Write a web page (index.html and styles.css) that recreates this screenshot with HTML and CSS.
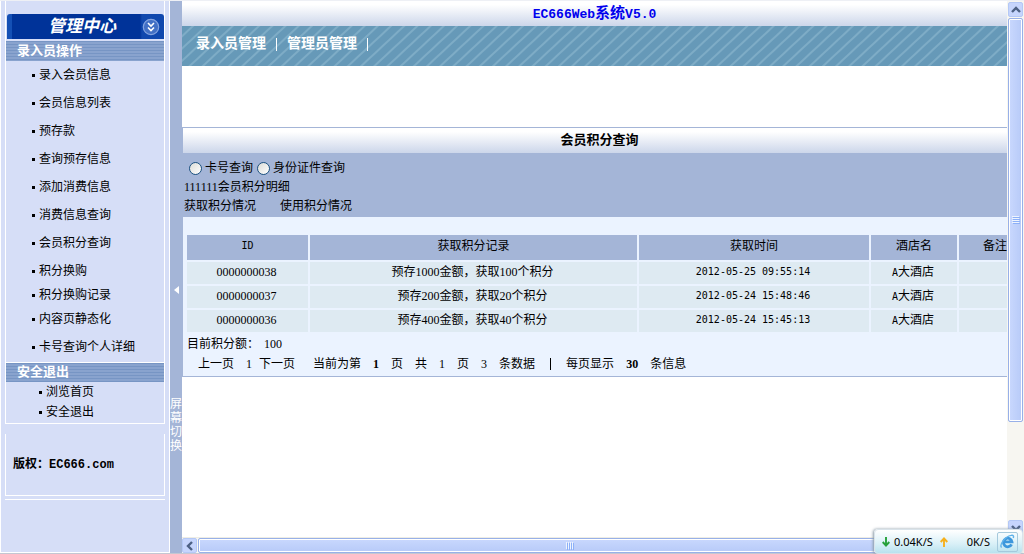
FILE: index.html
```html
<!DOCTYPE html>
<html lang="zh-CN">
<head>
<meta charset="utf-8">
<title>EC666Web系统V5.0</title>
<link rel="stylesheet" href="styles.css">
</head>
<body>
<div class="page">
  <aside class="sidebar">
    <div class="side-top">
      <div class="brand">
        <span class="brand-name">管理中心</span>
        <svg class="brand-icon" width="18" height="18" viewBox="0 0 18 18"><circle cx="9" cy="9" r="7.7" fill="#4270c5" stroke="#83a3e0" stroke-width="1.2"/><path d="M6 5l3 3 3-3M6 9.5l3 3 3-3" fill="none" stroke="#fff" stroke-width="1.6"/></svg>
      </div>
      <h2 class="side-head">录入员操作</h2>
      <ul class="menu">
        <li><a href="#">录入会员信息</a></li>
        <li><a href="#">会员信息列表</a></li>
        <li><a href="#">预存款</a></li>
        <li><a href="#">查询预存信息</a></li>
        <li><a href="#">添加消费信息</a></li>
        <li><a href="#">消费信息查询</a></li>
        <li><a href="#">会员积分查询</a></li>
        <li class="tight first"><a href="#">积分换购</a></li>
        <li class="tight"><a href="#">积分换购记录</a></li>
        <li class="tight"><a href="#">内容页静态化</a></li>
        <li class="last"><a href="#">卡号查询个人详细</a></li>
      </ul>
      <h2 class="side-head exit-head">安全退出</h2>
      <ul class="menu exit-menu">
        <li><a href="#">浏览首页</a></li>
        <li><a href="#">安全退出</a></li>
      </ul>
    </div>
    <div class="copyright">版权：<span class="latin">EC666.com</span></div>
  </aside>
  <button class="switch" type="button">
    <svg width="5" height="8" viewBox="0 0 5 8"><path d="M5 0v8L0 4z" fill="#fff"/></svg>
    <span class="switch-text">屏幕切换</span>
  </button>
  <main class="main">
    <h1 class="title"><span class="latin">EC666Web</span>系统<span class="latin">V5.0</span></h1>
    <nav class="nav">
      <a href="#">录入员管理</a>
      <a href="#">管理员管理</a>
    </nav>
    <section class="panel">
      <h2 class="panel-title">会员积分查询</h2>
      <form class="search">
        <div class="line options">
          <label><input type="radio" name="mode">卡号查询</label>
          <label><input type="radio" name="mode">身份证件查询</label>
        </div>
        <div class="line">111111会员积分明细</div>
        <div class="line tabs"><a href="#">获取积分情况</a><a href="#">使用积分情况</a></div>
      </form>
      <table class="records">
        <colgroup><col class="c-id"><col class="c-record"><col class="c-time"><col class="c-hotel"><col class="c-note"></colgroup>
        <thead><tr><th class="mono">ID</th><th>获取积分记录</th><th>获取时间</th><th>酒店名</th><th>备注</th></tr></thead>
        <tbody>
          <tr><td>0000000038</td><td>预存1000金额，获取100个积分</td><td class="mono">2012-05-25 09:55:14</td><td><span class="mono">A</span>大酒店</td><td></td></tr>
          <tr><td>0000000037</td><td>预存200金额，获取20个积分</td><td class="mono">2012-05-24 15:48:46</td><td><span class="mono">A</span>大酒店</td><td></td></tr>
          <tr><td>0000000036</td><td>预存400金额，获取40个积分</td><td class="mono">2012-05-24 15:45:13</td><td><span class="mono">A</span>大酒店</td><td></td></tr>
        </tbody>
      </table>
      <div class="total"><span>目前积分额：</span><span>100</span></div>
      <div class="pager">
        <div class="steps"><a href="#">上一页</a><span class="num">1</span><a href="#">下一页</a></div>
        <span>当前为第</span><b>1</b><span>页</span><span>共</span><span>1</span><span>页</span><span>3</span><span>条数据</span><span class="bar"></span><span>每页显示</span><b>30</b><span>条信息</span>
      </div>
    </section>
  </main>
  <div class="vscroll">
    <button class="sbtn" type="button" aria-label="向上滚动"><svg width="10" height="8" viewBox="0 0 10 8"><path d="M1 6l4-4 4 4" fill="none" stroke="#4d6185" stroke-width="2.4"/></svg></button>
    <div class="vthumb"><svg width="8" height="8" viewBox="0 0 8 8"><path d="M0 .5h7M0 2.5h7M0 4.5h7M0 6.5h7" stroke="#eef4fe"/><path d="M1 1.5h7M1 3.5h7M1 5.5h7M1 7.5h7" stroke="#8cb0f8"/></svg></div>
    <div class="vtrack"></div>
    <button class="sbtn" type="button" aria-label="向下滚动"><svg width="10" height="8" viewBox="0 0 10 8"><path d="M1 2l4 4 4-4" fill="none" stroke="#4d6185" stroke-width="2.4"/></svg></button>
  </div>
  <div class="hscroll">
    <button class="sbtn" type="button" aria-label="向左滚动"><svg width="8" height="10" viewBox="0 0 8 10"><path d="M6 1L2 5l4 4" fill="none" stroke="#4d6185" stroke-width="2.4"/></svg></button>
    <div class="hthumb"><svg width="8" height="8" viewBox="0 0 8 8"><path d="M.5 0v7M2.5 0v7M4.5 0v7M6.5 0v7" stroke="#eef4fe"/><path d="M1.5 1v7M3.5 1v7M5.5 1v7M7.5 1v7" stroke="#8cb0f8"/></svg></div>
    <div class="htrack"></div>
  </div>
  <div class="speed">
    <svg width="8" height="10" viewBox="0 0 8 10"><path d="M4 0v8M.7 5L4 8.500 7.300 5" fill="none" stroke="#27a13a" stroke-width="1.900"/></svg>
    <span class="down">0.04K/S</span>
    <svg width="8" height="10" viewBox="0 0 8 10"><path d="M4 10V2M.7 5L4 1.500 7.300 5" fill="none" stroke="#f6b01c" stroke-width="1.900"/></svg>
    <span class="up">0K/S</span>
    <span class="browser"><svg width="15" height="15" viewBox="0 0 15 15"><path d="M11.6 10.400A4.300 4.300 0 1 1 12 7.900H4.500" fill="none" stroke="#3d97dc" stroke-width="2.800"/><path d="M1.6 13.600C-1 11 5 2.500 11 1.400c2.500-.6 3 .8 2.200 2.700" fill="none" stroke="#5fb2ea" stroke-width="1.400"/></svg></span>
  </div>
</div>
</body>
</html>
```
FILE: styles.css
```css
* { box-sizing: border-box; }
body {
  margin: 0;
  font: 12px/20px "Liberation Serif", "Noto Sans CJK SC", sans-serif;
  color: #000;
  background: #fff;
}
a { color: inherit; text-decoration: none; }
h1, h2, ul { margin: 0; padding: 0; }
ul { list-style: none; }
button { padding: 0; border: 0; font: inherit; }
svg { display: block; flex: none; }
.mono { font-family: "DejaVu Sans Mono", monospace; font-size: 10px; font-weight: normal; }
.page {
  position: relative;
  display: grid;
  grid-template-columns: 170px 12px minmax(0, 1fr) 17px;
  grid-template-rows: minmax(0, 1fr) 16px;
  height: 100vh;
  border-top: 1px solid #eef0f5;
  border-bottom: 1px solid #c3c7d2;
}

/* Sidebar */
.sidebar {
  grid-row: 1 / 3;
  padding: 0 4px;
  border: solid #fff;
  border-width: 0 1px 1px;
  background: #d6def7;
}
.side-top {
  padding-top: 13px;
  border: solid #fff;
  border-width: 0 1px 1px;
}
.brand {
  display: flex;
  align-items: center;
  justify-content: space-between;
  height: 25px;
  margin-left: 1px;
  padding: 0 4px 0 36px;
  border-left: 5px solid #1450b5;
  border-radius: 3px 3px 0 0;
  background: linear-gradient(90deg, #039 128px, #1048ae 130px);
  color: #fff;
}
.brand-name { font-size: 17px; font-style: italic; font-weight: bold; }
.side-head {
  height: 20px;
  margin-top: 2px;
  padding-left: 11px;
  background: repeating-linear-gradient(#7795c4 0 1px, #89a3ce 1px 3px);
  color: #fff;
  font-size: 13px;
  line-height: 19px;
}
.menu { padding-bottom: 1px; }
.menu li { line-height: 28px; padding-left: 26px; }
.menu .tight { line-height: 24px; }
.menu .first, .menu .last { margin-top: 2px; }
.menu a { display: flex; align-items: center; gap: 4px; }
.menu a::before { content: ""; width: 3px; height: 3px; background: #000; }
.exit-head { margin-top: 0; border-top: 1px solid #fff; line-height: 17px; }
.menu.exit-menu li { padding-left: 33px; line-height: 20px; }
.copyright {
  margin-top: 10px;
  padding: 20px 7px;
  border: solid #fff;
  border-width: 0 1px 1px;
  box-shadow: 0 3px 0 #d6def7, 0 4px 0 #fff;
  font-weight: bold;
}
.copyright .latin { font-family: "Liberation Mono", monospace; }

/* Sidebar toggle */
.switch {
  grid-row: 1 / 3;
  display: flex;
  flex-direction: column;
  align-items: center;
  gap: 103px;
  padding-top: 285px;
  background: #a4b5d7;
  color: #fff;
}
.switch-text { width: 12px; line-height: 14px; }

/* Main area */
.main { overflow: hidden; }
.title {
  height: 25px;
  background: linear-gradient(#fff 15%, #ccd6ea);
  color: #00e;
  font-size: 15px;
  line-height: 24px;
  text-align: center;
}
.title .latin { font-family: "Liberation Mono", monospace; font-size: 13px; }
.nav {
  display: flex;
  align-items: center;
  height: 40px;
  padding: 0 0 4px 14px;
  background: repeating-linear-gradient(137deg, #6699b8 0 6px, #7eacc6 7px 8px, #6699b8 9px);
  color: #fff;
  font-size: 14px;
  font-weight: bold;
}
.nav a { display: flex; align-items: center; }
.nav a::after { content: ""; width: 1px; height: 13px; margin: 0 10px; background: #fff; }
.panel {
  width: max-content;
  min-width: 100%;
  margin-top: 61px;
  border: solid #a4b5d7;
  border-width: 1px 0 1px 1px;
  background: #ebf3ff;
}
.panel-title {
  height: 25px;
  padding-right: 17px;
  background: linear-gradient(#fff 15%, #ccd6ea);
  font-size: 13px;
  line-height: 23px;
  text-align: center;
}
.search { padding: 6px 1px 1px; background: #a4b5d7; }
.line { line-height: 19px; }
.options { display: flex; gap: 4px; padding-left: 5px; }
.options label { display: flex; align-items: center; gap: 3px; }
.options input {
  appearance: none;
  width: 13px;
  height: 13px;
  margin: 0;
  border: 1px solid #1c5180;
  border-radius: 50%;
  background: linear-gradient(135deg, #dcdcd7, #fff);
}
.tabs { display: flex; gap: 24px; }
.records {
  width: 850px;
  margin-top: 16px;
  padding-left: 2px;
  border-spacing: 2px;
  table-layout: fixed;
  text-align: center;
}
.records th { height: 25px; padding: 0 0 4px; background: #a4b5d7; font-weight: normal; }
.records td { height: 22px; padding: 0 2px 2px 0; background: #deeaf2; line-height: 18px; }
.c-id { width: 121px; }
.c-record { width: 327px; }
.c-time { width: 230px; }
.c-hotel { width: 86px; }
.total { display: flex; gap: 5px; padding-left: 4px; }
.pager { display: flex; gap: 12px; padding: 0 0 2px 15px; }
.steps { display: flex; gap: 7px; margin-right: 6px; }
.num { margin-left: 5px; }
.bar { width: 1px; height: 12px; margin: 4px 3px; background: #000; }

/* Scroll bars */
.vscroll {
  grid-row: 1 / 3;
  grid-column: 4;
  display: flex;
  flex-direction: column;
  padding: 1px 0 18px 1px;
  background: #f7f6f1;
}
.sbtn {
  display: flex;
  flex: none;
  align-items: center;
  justify-content: center;
  width: 15px;
  height: 15px;
  border: 1px solid #b4c8f6;
  border-radius: 2px;
  background: #c6d5fd;
}
.vthumb, .hthumb {
  display: flex;
  align-items: center;
  justify-content: center;
  border: 1px solid #98b0e8;
  border-radius: 2px;
  box-shadow: inset 0 0 0 1px #fff;
}
.vthumb { flex: 403; width: 15px; margin-top: 1px; background: linear-gradient(90deg, #c9d8fe, #b7caf8); }
.vtrack { flex: 98; }
.hscroll {
  grid-row: 2;
  grid-column: 3;
  display: flex;
  gap: 1px;
  border-top: 1px solid #eeede5;
  background: #f7f6f1;
}
.hthumb { flex: 742; background: linear-gradient(#c9d8fe, #b7caf8); }
.htrack { flex: 65; }

/* Network speed widget, floats over the scroll bars */
.speed {
  position: absolute;
  right: 1px;
  bottom: -1px;
  display: flex;
  align-items: center;
  width: 149px;
  height: 25px;
  padding: 0 4px 0 7px;
  gap: 4px;
  border: 1px solid #d9e3ea;
  border-radius: 4px;
  background: linear-gradient(#fff, #d9f0f7 60%, #b9e2ee);
  box-shadow: -1px 0 3px #8899a5;
  font: 11px/20px "Noto Sans", sans-serif;
}
.down { margin-right: 3px; }
.up { flex: 1; text-align: right; }
.browser {
  display: flex;
  align-items: center;
  justify-content: center;
  width: 21px;
  height: 20px;
  margin-left: 3px;
  border: 1px solid #a5c9dc;
  border-radius: 2px;
}
```
